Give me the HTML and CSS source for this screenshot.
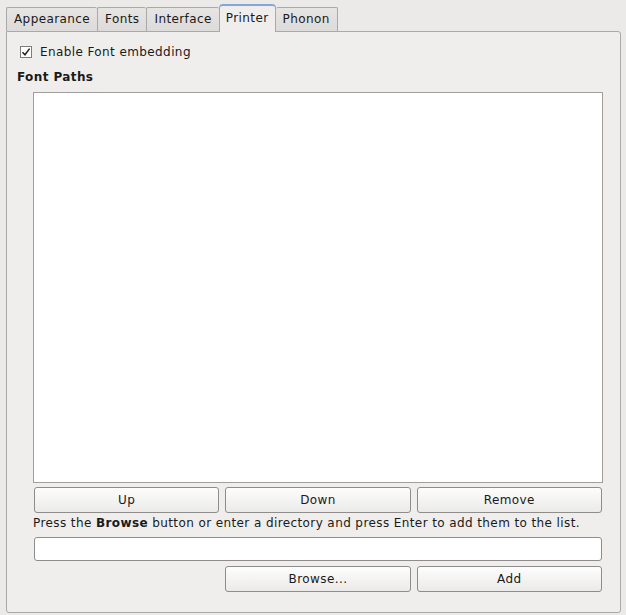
FILE: index.html
```html
<!DOCTYPE html>
<html lang="en">
<head>
    <meta charset="UTF-8">
    <title>Printer Settings</title>
    <link rel="stylesheet" href="styles.css">
</head>
<body>
    <div class="window">
        <!-- Tab bar -->
        <div class="tabs">
            <div class="tab">Appearance</div>
            <div class="tab">Fonts</div>
            <div class="tab">Interface</div>
            <div class="tab selected">Printer</div>
            <div class="tab">Phonon</div>
        </div>

        <div class="panel">
            <label class="check-row">
                <span class="checkbox">
                    <svg width="12" height="12" viewBox="0 0 12 12">
                        <path d="M2.5 6.2 L5 8.8 L9.6 2.6" fill="none" stroke="#222" stroke-width="1.5"/>
                    </svg>
                </span>
                Enable Font embedding
            </label>

            <div class="group-title">Font Paths</div>

            <div class="group-body">
                <div class="path-list"></div>

                <div class="button-row">
                    <button class="btn">Up</button>
                    <button class="btn">Down</button>
                    <button class="btn">Remove</button>
                </div>

                <p class="hint">Press the <b>Browse</b> button or enter a directory and press Enter to add them to the list.</p>

                <input type="text" class="path-input">

                <div class="button-row second">
                    <span></span>
                    <button class="btn">Browse...</button>
                    <button class="btn">Add</button>
                </div>
            </div>
        </div>
    </div>
</body>
</html>
```

FILE: styles.css
```css
* {
    box-sizing: border-box;
}

body {
    margin: 0;
    background: #eceae8;
    font-family: 'DejaVu Sans', 'Liberation Sans', sans-serif;
    font-size: 12px;
    letter-spacing: 0.4px;
    color: #1a1a1a;
}

.window {
    width: 626px;
    height: 615px;
    display: flex;
    flex-direction: column;
}

/* Tabs */
.tabs {
    display: flex;
    align-items: flex-end;
    height: 32px;
    padding-left: 6px;
    margin-bottom: -1px;
    position: relative;
    z-index: 1;
}

.tab {
    height: 24px;
    margin-bottom: 1px;
    padding: 0 7px;
    line-height: 22px;
    border: 1px solid #aaa9a7;
    border-bottom: none;
    border-right: none;
    background: linear-gradient(#e6e5e3, #dddbd9);
    border-radius: 2px 2px 0 0;
}

.tab:last-child {
    border-right: 1px solid #aaa9a7;
}

.tab.selected {
    height: 28px;
    margin-bottom: 0;
    line-height: 24px;
    padding: 0 6px;
    background: #efeeec;
    border-top: 2px solid #86a7d6;
    border-right: 1px solid #aaa9a7;
    border-radius: 4px 4px 0 0;
}

.tab.selected + .tab {
    border-left: none;
}

/* Panel */
.panel {
    margin: 0 5px 0 6px;
    height: 582px;
    border: 1px solid #aaa9a7;
    border-radius: 0 3px 3px 3px;
    background: #efeeec;
    padding: 10px 17px 0 13px;
}

.check-row {
    display: flex;
    align-items: center;
    gap: 8px;
    height: 20px;
}

.checkbox {
    width: 12px;
    height: 12px;
    border: 1px solid #7d7d7d;
    background: #fff;
    display: flex;
}

.checkbox svg {
    margin: -1px;
}

.group-title {
    font-weight: bold;
    margin: 7px 0 0 -3px;
    height: 16px;
    line-height: 16px;
}

.group-body {
    margin: 7px 0 0 13px;
}

.path-list {
    height: 391px;
    background: #fff;
    border: 1px solid #a09f9d;
}

.button-row {
    display: grid;
    grid-template-columns: 1fr 1fr 1fr;
    gap: 6px;
    margin: 4px 1px 0;
}

.btn {
    height: 26px;
    font-family: inherit;
    font-size: 12px;
    letter-spacing: inherit;
    color: #1a1a1a;
    border: 1px solid #8e8d8b;
    border-radius: 3px;
    background: linear-gradient(#fdfdfd, #ebeae9);
    padding: 0;
}

.hint {
    margin: 0;
    height: 20px;
    line-height: 20px;
    white-space: nowrap;
}

.path-input {
    display: block;
    width: calc(100% - 2px);
    height: 24px;
    margin: 4px 1px 0;
    border: 1px solid #8e8d8b;
    border-radius: 3px;
    background: #fff;
}

.button-row.second {
    margin-top: 5px;
}
```
